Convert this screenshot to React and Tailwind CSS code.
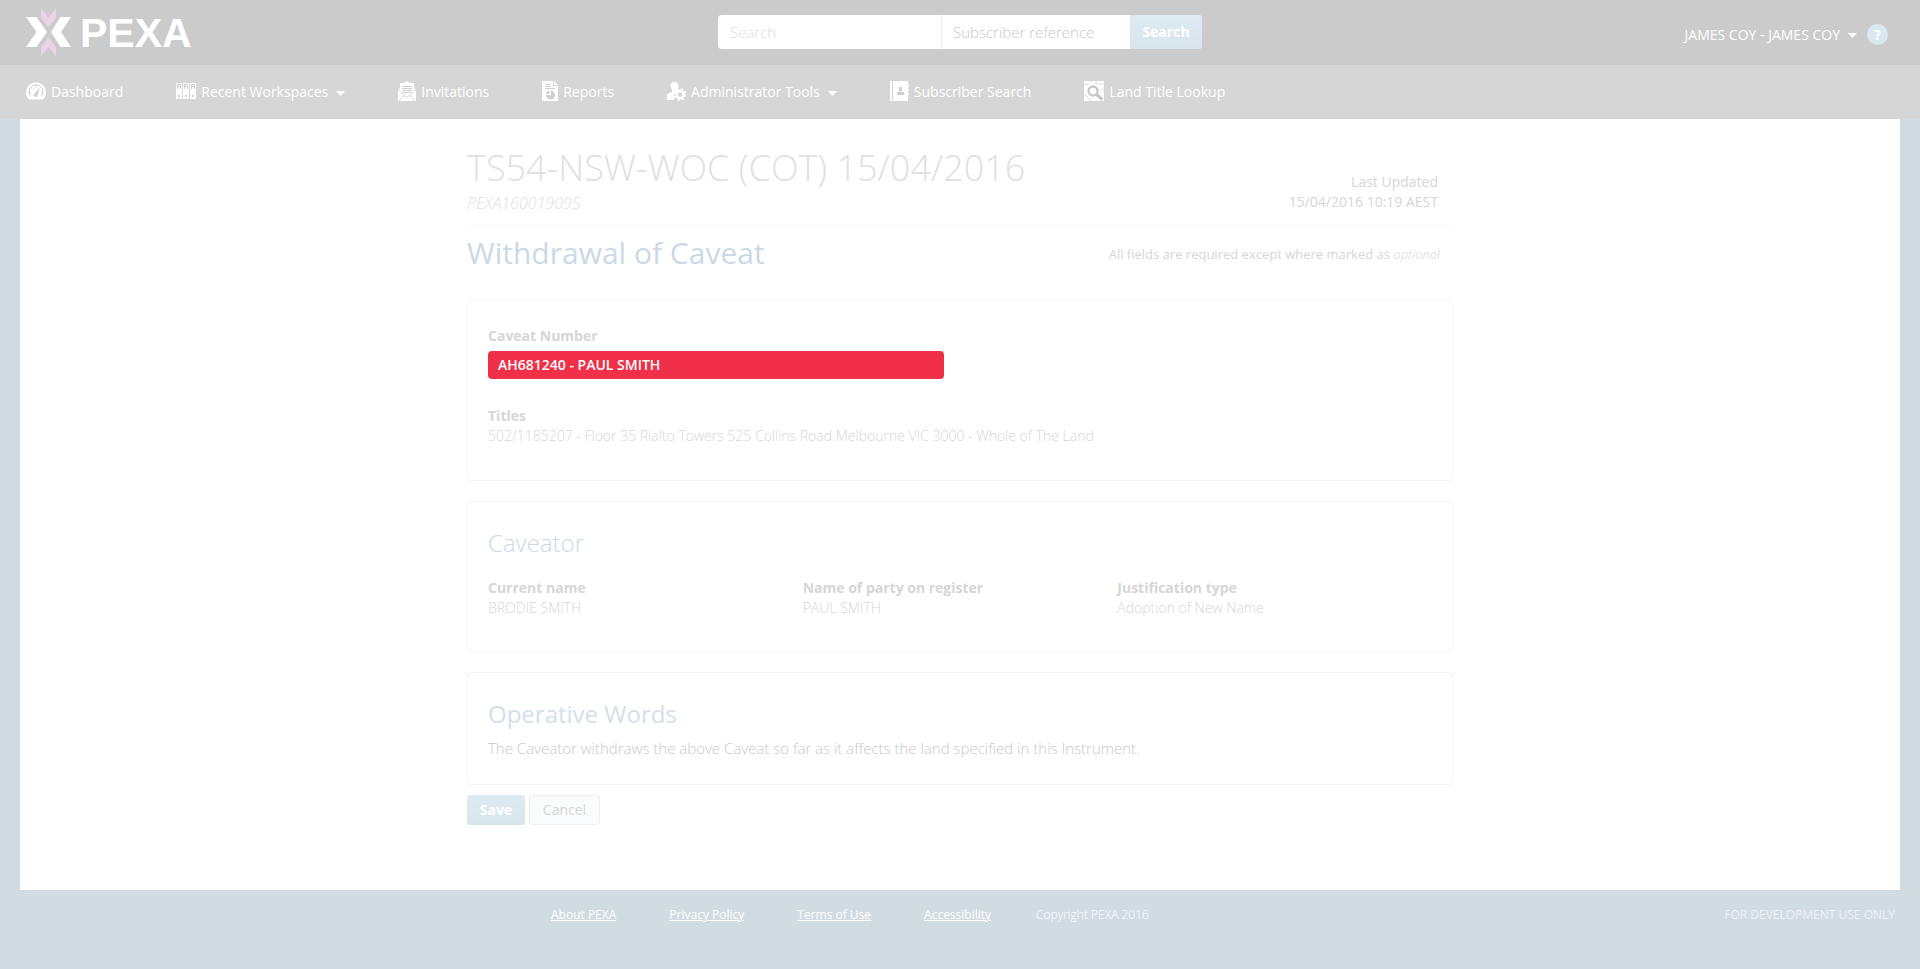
const Caret = () => (
  <svg className="mt-0.5 ml-2 shrink-0" width="9" height="5" viewBox="0 0 9 5" fill="#fff" aria-hidden="true">
    <path d="M0 0h9L4.5 5z" />
  </svg>
);

const Logo = () => (
  <a href="#home" className="flex items-center gap-2" aria-label="PEXA home">
    <svg width="46" height="50" viewBox="0 0 46 50" aria-hidden="true">
      <path fill="#e8d3e8" d="M15 0l7.500 9.500L30 0v10l-7.500 9.500L15 10zM15 48.500V39l7.500-10L30 39v9.500L22.500 39z" />
      <path fill="#fff" d="M0 9h10.500L21 24 10.500 39H0l10.500-15zM45 9H34.500L25 24l9.500 15H45L35 24z" />
    </svg>
    <span className="font-['Liberation_Sans',sans-serif] text-[41px] leading-[50px] font-bold text-white">PEXA</span>
  </a>
);

const DashboardIcon = () => (
  <svg width="20" height="20" viewBox="0 0 20 20" aria-hidden="true">
    <path fill="#fff" d="M3 18.500C1 16.500 0 14 0 11.200a10 10 0 0 1 20 0c0 2.800-1 5.300-3 7.300z" />
    <path fill="none" stroke="#cfcfcf" d="M4.800 15.500a7 7 0 1 1 10.400 0" />
    <path stroke="#cfcfcf" d="M10 4v2.500M3 11.500h2M15 11.500h2M5 6.500l1.500 1.500" />
    <path fill="#cfcfcf" d="M14 6.500l-2.500 8a1.800 1.800 0 1 1-2.800-2z" />
  </svg>
);
const BindersIcon = () => (
  <svg width="20" height="20" viewBox="0 0 20 20" aria-hidden="true">
    {[0, 7, 14].map((x) => (
      <g key={x}>
        <path fill="#fff" d={`M${x} 2h6v16h-6z`} />
        <path fill="#d0d0d0" d={`M${x + 1} 3h4v1h-4zM${x + 1} 4h1v4h-1zM${x + 4} 4h1v4h-1zM${x + 2} 5h2v1h-2zM${x + 2} 14h2v2h-2z`} />
      </g>
    ))}
  </svg>
);
const InviteIcon = () => (
  <svg width="18" height="20" viewBox="0 0 18 20" aria-hidden="true">
    <path fill="#fff" d="M9 0l3 2h4v5l2 1.500V20H0V8.500L2 7V2h4z" />
    <path fill="none" stroke="#cfcfcf" d="M4 5.500h10M4 7.500h10M4 9.500h10M5 11.500h8M0 8.500l6.500 6L9 16.500l2.500-2L18 8.500M6.500 14.500L1 19.500M11.500 14.500l5.500 5" />
  </svg>
);
const ReportIcon = () => (
  <svg width="16" height="20" viewBox="0 0 16 20" aria-hidden="true">
    <path fill="#fff" d="M0 0h11v5h5v15H0zM12 0l4 4h-4z" />
    <path stroke="#cfcfcf" d="M3 3.500h6M3 5.500h6M3 7.500h10" />
    <circle cx="8.500" cy="14" r="4.500" fill="#cfcfcf" />
    <path fill="#fff" d="M8.500 9v5H3.500V9z" />
    <path fill="#cfcfcf" d="M4 13a4 4 0 0 1 3.500-3.500V13z" />
    <path stroke="#fff" d="M8.500 9v5.500M3.500 13.500h5" />
  </svg>
);
const AdminIcon = () => (
  <svg width="19" height="20" viewBox="0 0 19 20" aria-hidden="true">
    <circle cx="7.500" cy="5" r="4" fill="#fff" />
    <path fill="#fff" d="M5 8h5v2l-3 3v6H0v-4c0-2 1-3 5-4z" />
    <circle cx="13" cy="13.500" r="3.500" fill="none" stroke="#fff" strokeWidth="2.600" />
    <circle cx="13" cy="13.500" r="5.500" fill="none" stroke="#fff" strokeWidth="1.800" strokeDasharray="2.320 2" />
  </svg>
);
const ContactsIcon = () => (
  <svg width="19" height="20" viewBox="0 0 19 20" aria-hidden="true">
    <path fill="#fff" d="M0 0h2v20H0zM3 0h15v4h1v2h-1v2h1v2h-1v2h1v2h-1v6H3z" />
    <path fill="#cfcfcf" d="M9 6h3v4h-1v1h3v3H7v-3h3v-1H9z" />
  </svg>
);
const LandIcon = () => (
  <svg width="20" height="20" viewBox="0 0 20 20" aria-hidden="true">
    <path fill="#fff" d="M0 0h20v20H0z" />
    <path fill="none" stroke="#dedede" d="M0 3.500h4l3-3M12 0v3h8M0 14l3 1 4 5M16 10l4-2" />
    <circle cx="9" cy="10" r="4.500" fill="#fff" stroke="#c8c8c8" strokeWidth="2.300" />
    <path stroke="#c8c8c8" strokeWidth="3" d="M12.500 13.500l6 5" />
  </svg>
);

const navItems = [
  { label: "Dashboard", Icon: DashboardIcon },
  { label: "Recent Workspaces", Icon: BindersIcon, menu: true },
  { label: "Invitations", Icon: InviteIcon },
  { label: "Reports", Icon: ReportIcon },
  { label: "Administrator Tools", Icon: AdminIcon, menu: true },
  { label: "Subscriber Search", Icon: ContactsIcon },
  { label: "Land Title Lookup", Icon: LandIcon },
];

const parties = [
  ["Current name", "BRODIE SMITH"],
  ["Name of party on register", "PAUL SMITH"],
  ["Justification type", "Adoption of New Name"],
];

const footerLinks = ["About PEXA", "Privacy Policy", "Terms of Use", "Accessibility"];

const Header = () => (
  <header>
    <div className="grid h-[65px] grid-cols-[1fr_auto_1fr] items-center bg-[#cbcbcb] px-[26px]">
      <Logo />
      <form className="mb-0.5 flex h-[34px] overflow-hidden rounded-sm bg-white text-[15px]" onSubmit={(e) => e.preventDefault()}>
        <input
          type="text"
          aria-label="Search"
          placeholder="Search"
          className="w-[224px] border-r border-[#f0f0f0] px-3 font-light outline-none placeholder:text-[#dcdcdc]"
        />
        <select aria-label="Search by" className="w-[188px] appearance-none px-[11px] font-light text-[#c8c8c8] outline-none">
          <option>Subscriber reference</option>
        </select>
        <button type="submit" className="w-[72px] bg-linear-to-b from-[#deebf3] to-[#d8e5ec] text-sm font-bold text-white">
          Search
        </button>
      </form>
      <div className="flex items-center justify-end pt-1 pr-1.5">
        <button type="button" className="flex items-center text-sm text-white">
          JAMES COY - JAMES COY
          <Caret />
        </button>
        <button
          type="button"
          aria-label="Help"
          className="ml-[10px] size-[21px] rounded-full bg-[#dae8f0] text-sm leading-[21px] font-bold text-white"
        >
          ?
        </button>
      </div>
    </div>
    <nav className="flex h-[54px] items-center gap-[53px] bg-[#d6d6d6] px-[26px]">
      {navItems.map(({ label, Icon, menu }) => (
        <a key={label} href="#nav" className="flex items-center text-sm whitespace-nowrap text-white">
          <span className="mb-0.5">
            <Icon />
          </span>
          <span className="ml-[5px]">{label}</span>
          {menu && <Caret />}
        </a>
      ))}
    </nav>
  </header>
);

export default function App() {
  return (
    <div className="flex min-h-screen flex-col bg-[#d1dce2] font-['Open_Sans',sans-serif] text-sm leading-5 text-[#d6d6d6]">
      <Header />
      <main className="mx-5 bg-white pt-7 pb-[65px]">
        <div className="mx-auto max-w-[986px]">
          <div className="flex items-end justify-between border-b border-dashed border-[#f5f5f5] pb-3">
            <div>
              <h1 className="text-[36px] leading-[42px] font-light text-[#e0e0e0]">TS54-NSW-WOC (COT) 15/04/2016</h1>
              <p className="mt-1 text-base leading-5 font-light text-[#e0e0e0] italic">PEXA160019095</p>
            </div>
            <p className="pr-[15px] pb-px text-right">
              Last Updated
              <br />
              15/04/2016 10:19 AEST
            </p>
          </div>
          <div className="flex items-center justify-between pt-1.5 pb-[25px]">
            <h2 className="text-[30px] leading-[42px] text-[#cbd9e6]">Withdrawal of Caveat</h2>
            <p className="pt-0.5 pr-[13px] text-[13px]">
              All fields are required except where marked as <em className="font-light">optional</em>
            </p>
          </div>

          <section className="rounded border border-[#f5f5f5] px-5 pt-[26px] pb-[34px]">
            <label htmlFor="caveat" className="block font-bold">
              Caveat Number
            </label>
            <select
              id="caveat"
              className="mt-[5px] block h-7 w-[456px] appearance-none rounded bg-[#f03048] px-[10px] text-sm font-semibold text-white"
            >
              <option>AH681240 - PAUL SMITH</option>
            </select>
            <h4 className="mt-[27px] font-bold">Titles</h4>
            <p className="font-light">502/1185207 - Floor 35 Rialto Towers 525 Collins Road Melbourne VIC 3000 - Whole of The Land</p>
          </section>

          <section className="mt-5 rounded border border-[#f5f5f5] px-5 pt-[25px] pb-[33px]">
            <h3 className="text-2xl leading-8 font-light text-[#cbd9e6]">Caveator</h3>
            <dl className="mt-[19px] grid grid-cols-3">
              {parties.map(([name, value]) => (
                <div key={name}>
                  <dt className="font-bold">{name}</dt>
                  <dd className="font-light">{value}</dd>
                </div>
              ))}
            </dl>
          </section>

          <section className="mt-5 rounded border border-[#f5f5f5] px-5 pt-[25px] pb-[25px]">
            <h3 className="text-2xl leading-8 text-[#d3dfea]">Operative Words</h3>
            <p className="mt-2 pb-px text-[15px] font-light text-[#c8c8c8]">
              The Caveator withdraws the above Caveat so far as it affects the land specified in this Instrument.
            </p>
          </section>

          <div className="mt-[10px] flex gap-1">
            <button type="button" className="h-[30px] w-[58px] rounded-[3px] bg-linear-to-b from-[#deebf3] to-[#d8e5ec] font-bold text-white">
              Save
            </button>
            <button type="button" className="h-[30px] w-[71px] rounded-[3px] border border-[#f0f0f0] bg-[#fafbfc]">
              Cancel
            </button>
          </div>
        </div>
      </main>
      <footer className="grid grid-cols-[1fr_minmax(0,986px)_1fr] pt-[15px] text-xs leading-5 text-white">
        <div className="col-start-2 flex gap-[53px] pl-[84px] whitespace-nowrap">
          {footerLinks.map((label) => (
            <a key={label} href="#footer" className="underline">
              {label}
            </a>
          ))}
          <span className="-ml-2 font-light">Copyright PEXA 2016</span>
        </div>
        <p className="justify-self-end pr-[25px] whitespace-nowrap text-[#edf1f3]">FOR DEVELOPMENT USE ONLY</p>
      </footer>
    </div>
  );
}
